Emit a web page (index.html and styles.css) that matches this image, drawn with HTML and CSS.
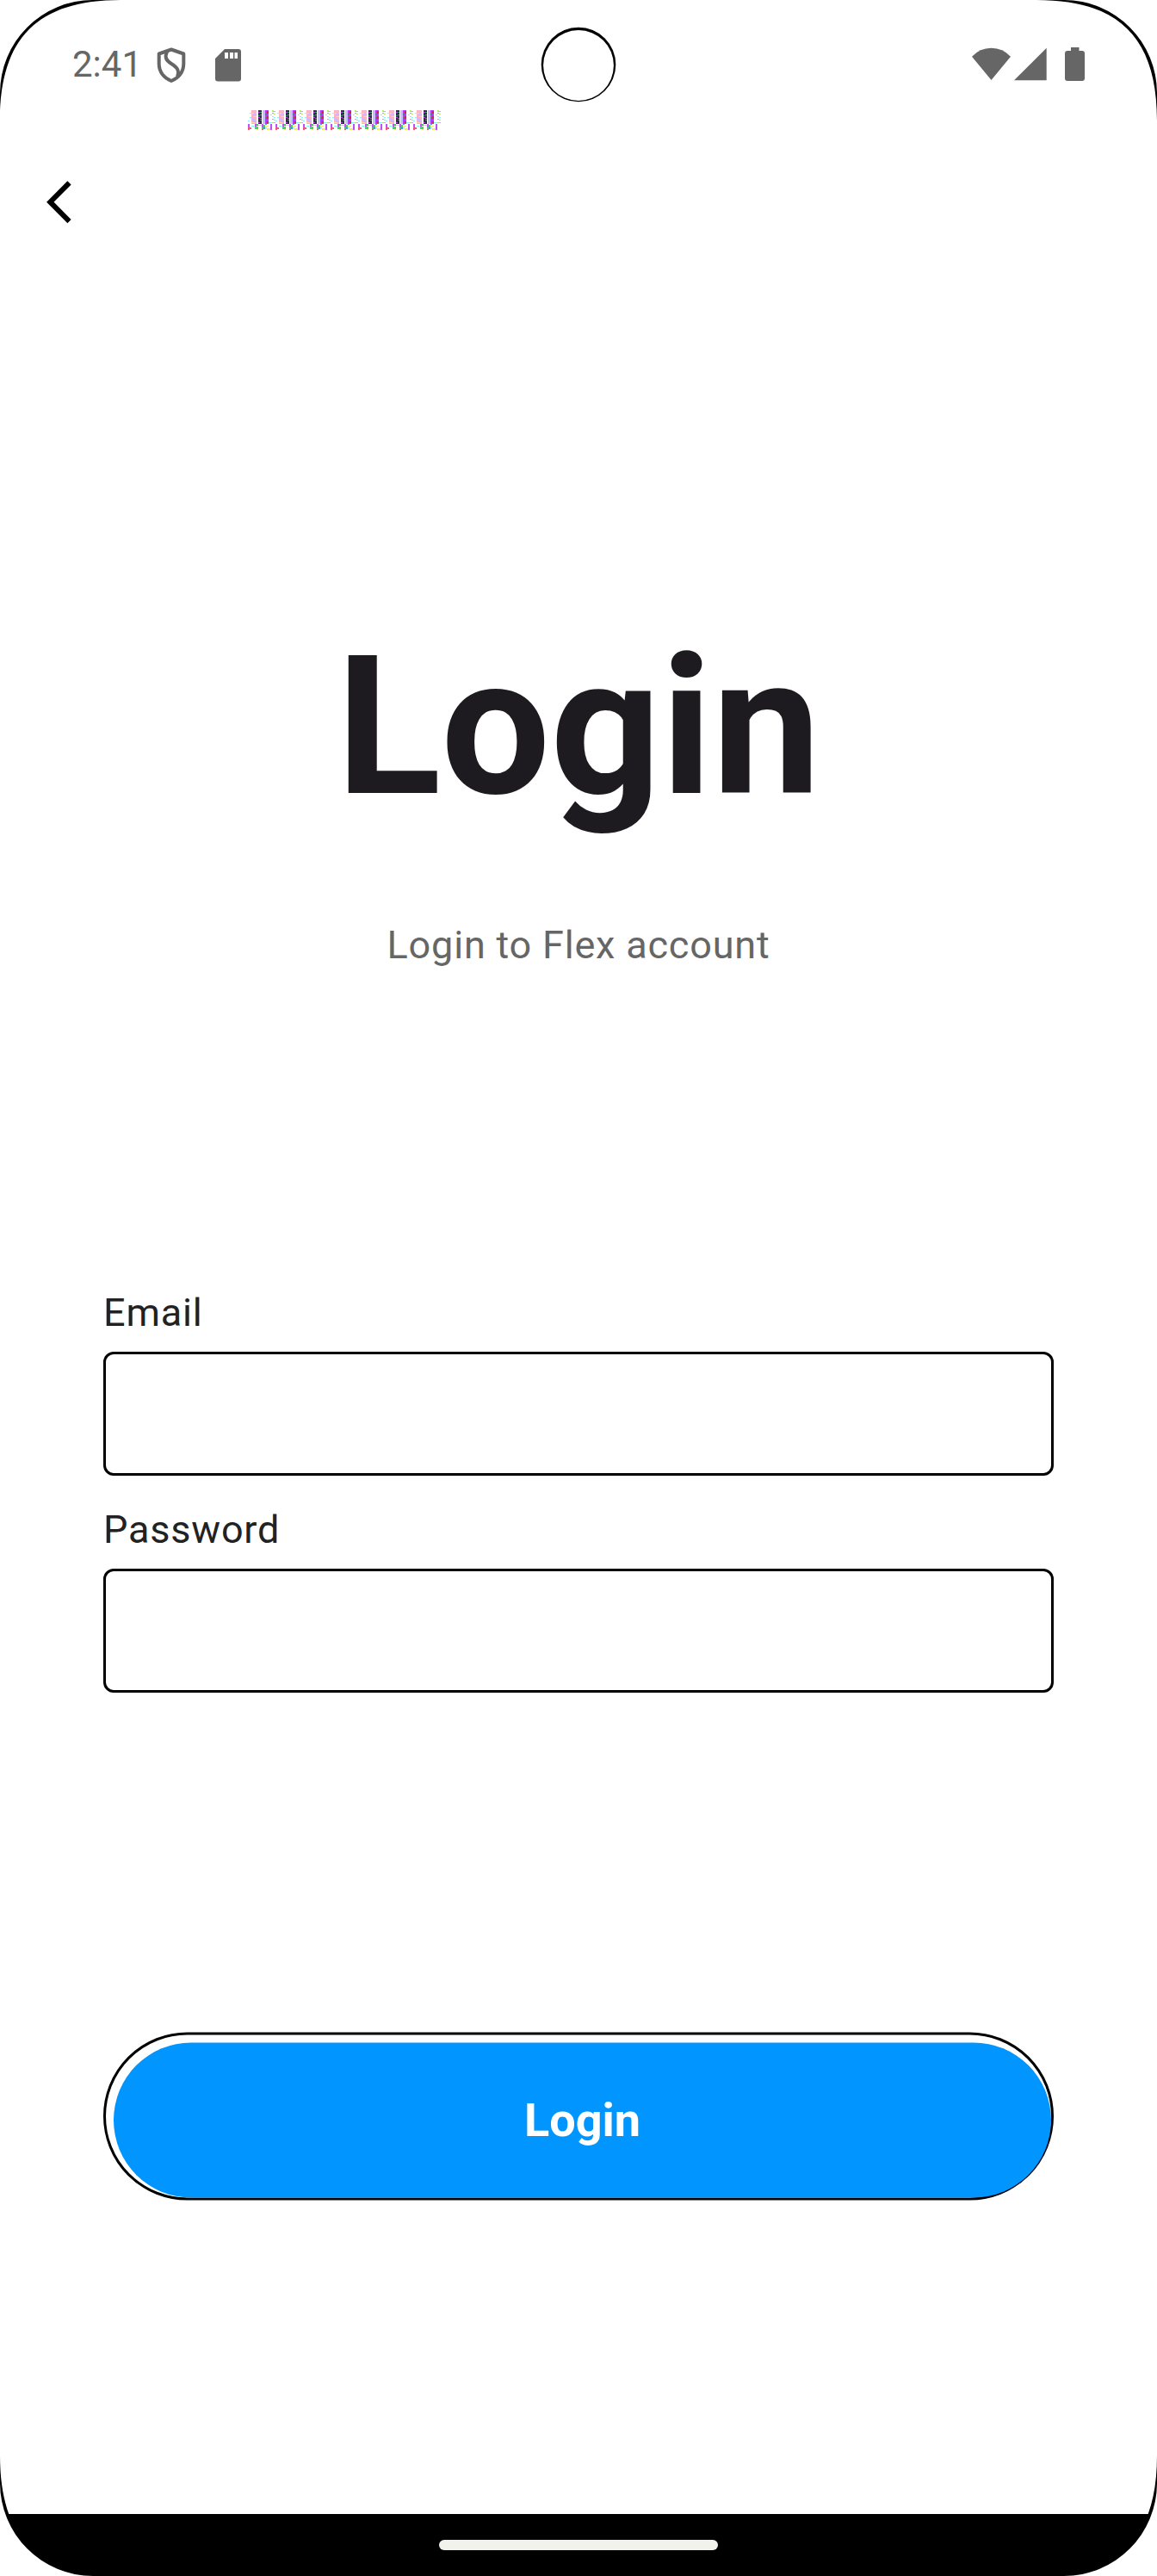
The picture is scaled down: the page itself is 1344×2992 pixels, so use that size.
FILE: index.html
```
<!DOCTYPE html>
<html lang="en">
<head>
<meta charset="utf-8">
<title>Login</title>
<link rel="stylesheet" href="styles.css">
</head>
<body>
<div class="screen">
  <header class="status">
    <div class="status-left">
      <span class="clock">2:41</span>
      <svg class="shield" width="34" height="42" viewBox="0 0 34 42" fill="none" stroke="#666" stroke-width="4"><path d="M17 2.500 31.300 7.500V19C31.300 29 25 36 17 39C9 36 2.700 29 2.700 19V7.500Z" stroke-linejoin="round"/><path d="M12 5C9 12 11 15 17 19C23 23 27 26 24 34"/></svg>
      <svg class="card" width="30" height="38" viewBox="0 0 30 38"><path fill="#666" d="M11 0H27Q30 0 30 3V34.500Q30 37.500 27 37.500H3Q0 37.500 0 34.500V11Z"/><path fill="#fff" d="M11 4h4v7h-4zM17 4h4v7h-4zM22.500 4h3.500v7h-3.500z"/></svg>
    </div>
    <svg class="camera" width="88" height="88" viewBox="0 0 88 88"><circle cx="44" cy="44" r="43.300"/><circle cx="44" cy="45" r="40.900" fill="#fff"/></svg>
    <div class="status-right">
      <svg width="45" height="39" viewBox="0 0 45 39" fill="#666"><path d="M0 10.800Q9 .7 22.500 .7T45 10.800L22.500 38Z"/></svg>
      <svg class="signal" width="38" height="39" viewBox="0 0 38 39" fill="#666"><path d="M37.700 .7V38.300H0Z"/></svg>
      <svg class="battery" width="23" height="39" viewBox="0 0 23 39" fill="#666"><path d="M7 0h9.500v4H20Q23 4 23 7V36Q23 39 20 39H3Q0 39 0 36V7Q0 4 3 4H7Z"/></svg>
    </div>
    <svg class="noise" width="224" height="23" shape-rendering="crispEdges">
      <defs><pattern id="bars" width="32" height="23" patternUnits="userSpaceOnUse">
        <path fill="#fbb4c4" d="M4 0h6v16H4z"/>
        <path fill="#cdb8ff" d="M6 4h4v2H6zM4 9h4v2H4zM6 12h4v2H6zM17 0h3v16h-3z"/>
        <path fill="#ffd9ae" d="M4 3h3v1H4zM7 7h3v1H7zM4 14h4v1H4z"/>
        <path fill="#303040" d="M12 0h4v16h-4z"/>
        <path fill="#b43cf0" d="M12 2h2v1h-2zM14 5h2v1h-2zM12 8h2v1h-2zM14 11h2v1h-2zM12 14h2v1h-2zM20 0h4v16h-4z"/>
        <path fill="#3d8b75" d="M14 2h2v1h-2zM12 6h2v1h-2zM14 9h2v1h-2zM20 3h2v2h-2zM20 8h2v2h-2zM20 13h2v1h-2z"/>
        <path fill="#d91e4c" d="M22 1h2v3h-2zM22 7h2v3h-2zM22 13h2v2h-2z"/>
        <path fill="#a6d9d2" d="M17 3h2v1h-2zM18 7h2v1h-2zM17 12h2v1h-2z"/>
        <path fill="#b8ee66" d="M28 0h2v2h-2zM30 4h2v1h-2zM28 7h2v1h-2zM30 11h2v1h-2zM28 14h2v1h-2z"/>
        <path fill="#b9a8dc" d="M28 3h2v1h-2zM28 10h2v1h-2zM30 1h2v1h-2zM30 14h2v1h-2z"/>
        <path fill="#7df5f5" d="M2 3h2v1H2zM0 12h2v1H0zM2 8h2v1H2zM26 5h2v1h-2zM30 8h2v1h-2zM24 14h4v1h-4zM12 17h4v1h-4zM4 18h3v1H4zM20 20h2v1h-2z"/>
        <path fill="#c44dff" d="M0 16h2v4H0zM8 16h2v3H8zM16 16h2v4h-2zM26 16h2v7h-2z"/>
        <path fill="#41d65b" d="M8 19h4v3H8zM18 17h2v3h-2zM16 20h2v2h-2zM10 16h2v1h-2z"/>
        <path fill="#e8f05a" d="M10 22h2v1h-2zM20 18h4v1h-4zM22 21h4v2h-4z"/>
        <path fill="#4f8af5" d="M18 20h2v2h-2zM20 16h2v1h-2zM10 17h2v1h-2z"/>
        <path fill="#f0557c" d="M0 20h2v3H0zM2 20h2v2H2zM16 22h2v1h-2z"/>
      </pattern></defs>
      <rect width="224" height="23" fill="url(#bars)"/>
    </svg>
  </header>
  <nav class="nav"><svg width="30" height="50" viewBox="0 0 30 50" fill="none" stroke="#000" stroke-width="6"><path d="M26.500 2.300 4.300 24.700 26.500 47.100"/></svg></nav>
  <main>
    <h1>Login</h1>
    <p class="subtitle">Login to Flex account</p>
    <form class="form">
      <label for="email">Email</label>
      <input id="email" type="email">
      <label for="password">Password</label>
      <input id="password" type="password">
      <div class="button-frame"><button type="button">Login</button></div>
    </form>
  </main>
  <footer class="gesture"><span class="handle"></span></footer>
  <svg class="bezel" width="1344" height="2992" viewBox="0 0 1344 2992">
    <defs>
      <g id="corner"><path d="M0 0H140C44 0 0 44 0 140Z"/><path fill="#fff" d="M0 0H108A108 108 0 0 0 0 108Z"/></g>
    </defs>
    <use href="#corner"/><use href="#corner" transform="translate(1344) scale(-1 1)"/>
    <use href="#corner" transform="translate(0 2992) scale(1 -1)"/><use href="#corner" transform="translate(1344 2992) scale(-1 -1)"/>
  </svg>
</div>
</body>
</html>
```
FILE: styles.css
```
* { box-sizing: border-box; }
body { margin: 0; background: #fff; font-family: Roboto, sans-serif; }
.screen { position: relative; width: 1344px; height: 2992px; display: flex; flex-direction: column; overflow: hidden; }
svg { display: block; flex: none; }
.status { position: relative; height: 152px; display: flex; justify-content: space-between; padding: 0 84px; }
.status-left, .status-right { display: flex; height: 152px; }
.status-right { padding-top: 55px; }
.clock { width: 98px; padding-top: 50px; font-size: 42px; line-height: 50px; color: #666; white-space: nowrap; }
.shield { margin-top: 55px; }
.card { margin: 57px 0 0 34px; }
.signal { margin-left: 4px; }
.battery { margin-left: 21px; }
.camera { position: absolute; left: 628px; top: 31px; }
.noise { position: absolute; left: 288px; top: 128px; }
.nav { height: 108px; padding: 58px 0 0 54px; }
main { flex: 1; }
h1 { margin: 454px 0 0; font-size: 225px; line-height: 260px; font-weight: 700; color: #1d1b20; text-align: center; }
.subtitle { margin: 96px 0 0; font-size: 45px; line-height: 56px; letter-spacing: .8px; color: #666; text-align: center; }
.form { display: flex; flex-direction: column; padding: 0 120px; margin-top: 369px; }
label { font-size: 45px; line-height: 60px; letter-spacing: .8px; color: #222; height: 75px; }
input { height: 144px; width: 100%; margin: 0 0 33px; border: 3px solid #000; border-radius: 12px; background: #fff; font: 45px Roboto, sans-serif; padding: 0 30px; }
.button-frame { height: 195px; margin-top: 361px; border: 3px solid #000; border-radius: 97.5px; padding: 9px 0 0 9px; transform: translateY(.5px); }
button { display: block; width: 100%; height: 180px; border: 0; padding: 0 0 2px; border-radius: 90px; background: #0095ff; color: #fff; font: 700 54px Roboto, sans-serif; }
.gesture { height: 72px; background: #000; display: flex; justify-content: center; padding-top: 30px; }
.handle { width: 324px; height: 12px; border-radius: 6px; background: #f2f2ec; }
.bezel { position: absolute; left: 0; top: 0; pointer-events: none; }
```
